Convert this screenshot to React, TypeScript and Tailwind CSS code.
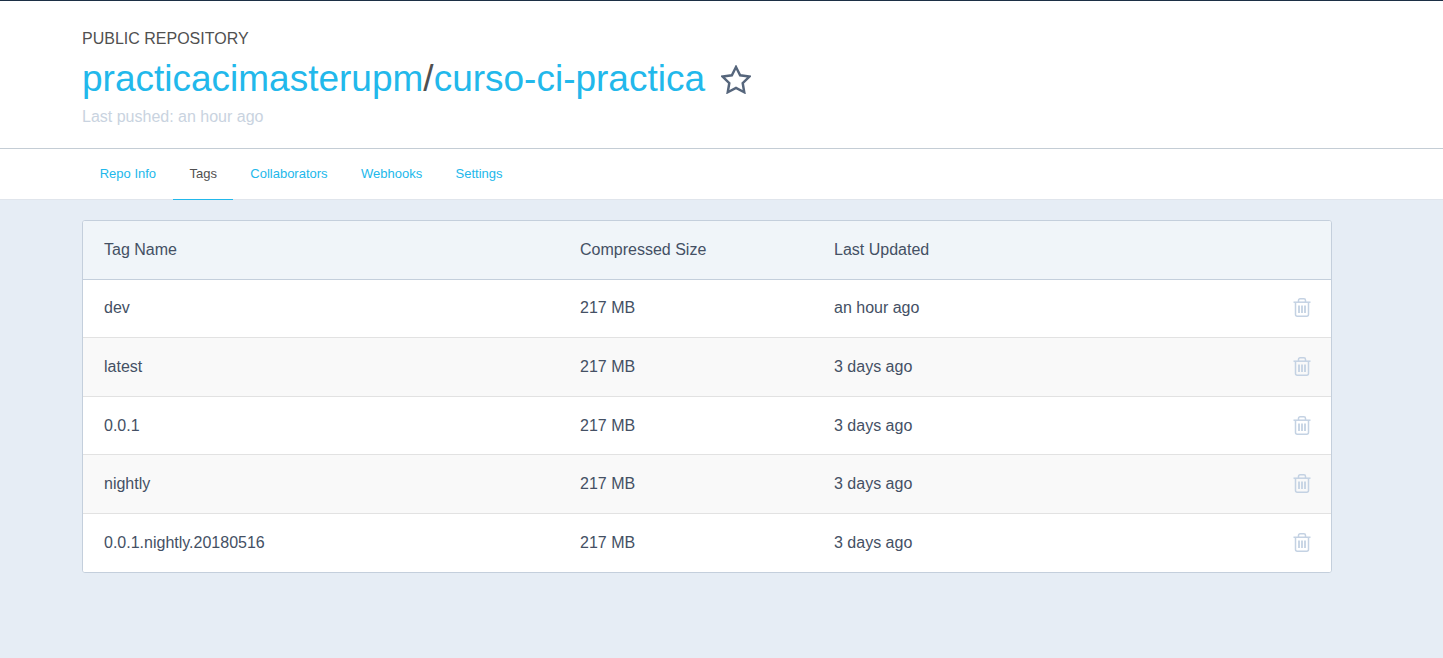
const tabs = ["Repo Info", "Tags", "Collaborators", "Webhooks", "Settings"];

const tags = [
  { name: "dev", size: "217 MB", updated: "an hour ago" },
  { name: "latest", size: "217 MB", updated: "3 days ago" },
  { name: "0.0.1", size: "217 MB", updated: "3 days ago" },
  { name: "nightly", size: "217 MB", updated: "3 days ago" },
  { name: "0.0.1.nightly.20180516", size: "217 MB", updated: "3 days ago" },
];

const TrashIcon = () => (
  <svg className="mb-[1px]" width="18" height="19" viewBox="0 0 18 19" fill="none" stroke="#c4d2e3" strokeWidth="1.5">
    <path d="M0.5 4.2h17" />
    <path d="M5.5 4.2V2.4c0-.9.7-1.6 1.6-1.6h3.8c.9 0 1.6.7 1.6 1.6v1.8" />
    <path d="M2.5 4.2v12.3c0 1 .8 1.7 1.8 1.7h9.4c1 0 1.8-.7 1.8-1.7V4.2" />
    <path d="M6 7.5v7.5M9 7.5v7.5M12 7.5v7.5" strokeWidth="1.8" />
  </svg>
);

const StarIcon = () => (
  <svg className="ml-[16px] mt-[1px]" width="30" height="29" viewBox="1.6 1.4 26.8 26" fill="none" stroke="#56667c" strokeWidth="2.2" strokeMiterlimit="4">
    <polygon points="15,3.2 18.7,10.6 27,11.8 21,17.6 22.4,25.8 15,21.9 7.6,25.8 9,17.6 3,11.8 11.3,10.6" />
  </svg>
);

const App = () => {
  return (
    <div
      className="min-h-[658px] bg-[#e6edf5] text-[16px] text-[#445064]"
      style={{ fontFamily: '"Liberation Sans", Arial, sans-serif' }}
    >
      <div className="h-[149px] border-t border-b border-t-[#1c2f45] border-b-[#c4cdd5] bg-white px-[82px] pt-[28px]">
        <div className="text-[16px] leading-[20px] text-[#505050]">PUBLIC REPOSITORY</div>
        <div className="mt-[5px] flex items-center text-[37px] leading-[50px]">
          <span className="text-[#22b8eb]">practicacimasterupm</span>
          <span className="text-[#505050]">/</span>
          <span className="text-[#22b8eb]">curso-ci-practica</span>
          <StarIcon />
        </div>
        <div className="mt-[3px] text-[16px] leading-[20px] text-[#c9d3e0]">Last pushed: an hour ago</div>
      </div>

      <div className="flex h-[51px] border-b border-[#e0e5ec] bg-white pl-[83px]">
        {tabs.map((tab) => (
          <div
            key={tab}
            className={
              tab === "Tags"
                ? "mr-[1px] flex h-[51px] items-center border-b border-[#22b8eb] pl-[16.7px] pr-[15.7px] text-[13px] text-[#505050]"
                : "flex h-[51px] items-center border-b border-transparent px-[16.7px] text-[13px] text-[#22b8eb]"
            }
          >
            {tab}
          </div>
        ))}
      </div>

      <div className="px-[82px] pt-[20px]">
        <div className="w-[1250px] overflow-hidden rounded-[3px] border border-[#c4cfdc] bg-white">
          <div className="flex h-[58.6px] items-center border-b border-[#c4cfdc] bg-[#f0f5f9] pl-[21px]">
            <div className="w-[476px]">Tag Name</div>
            <div className="w-[254px]">Compressed Size</div>
            <div>Last Updated</div>
          </div>
          {tags.map((tag, i) => (
            <div
              key={tag.name}
              className={
                i % 2 === 1
                  ? "flex h-[58.6px] items-center border-b border-[#e2e2e2] bg-[#f9f9f9] pl-[21px] pr-[20px]"
                  : "flex h-[58.6px] items-center border-b border-[#e2e2e2] bg-white pl-[21px] pr-[20px] last:h-[58px] last:border-b-0"
              }
            >
              <div className="w-[476px]">{tag.name}</div>
              <div className="w-[254px]">{tag.size}</div>
              <div className="flex-1">{tag.updated}</div>
              <TrashIcon />
            </div>
          ))}
        </div>
      </div>
    </div>
  );
};

export default App;
